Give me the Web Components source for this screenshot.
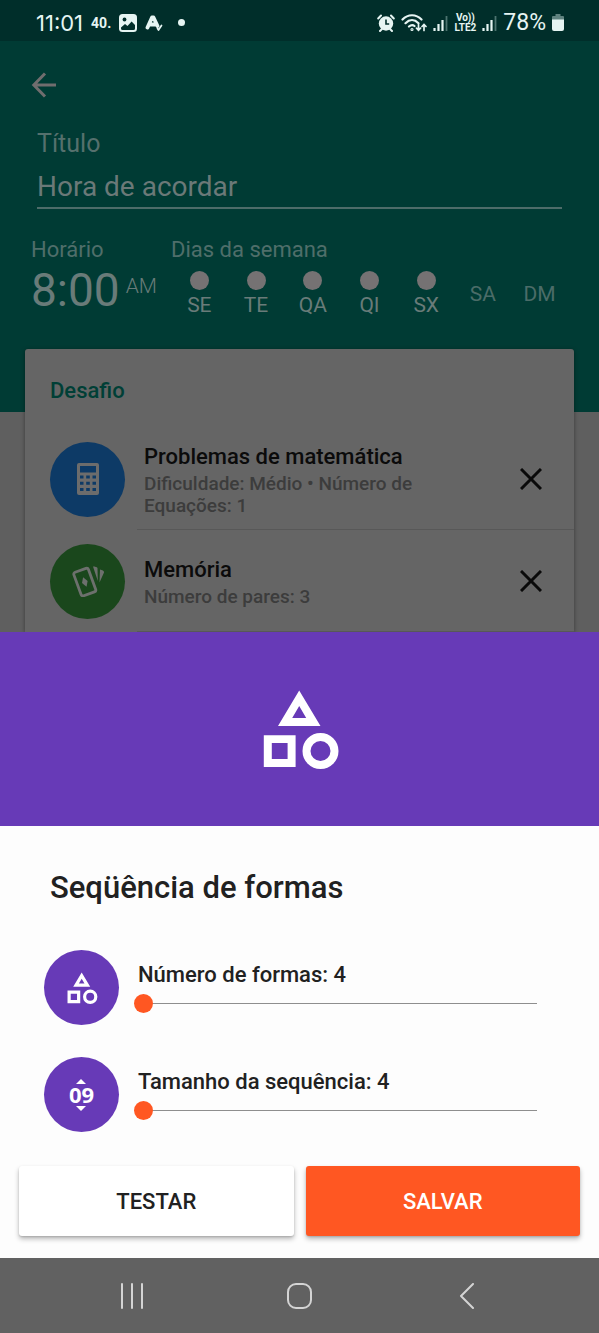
<!DOCTYPE html>
<html lang="pt-BR">
<head>
<meta charset="utf-8">
<meta name="viewport" content="width=device-width, initial-scale=1">
<title>Hora de acordar</title>
<style>
  body { margin: 0; background: #5f5f5f; font-family: Roboto, "Liberation Sans", sans-serif; }
</style>
</head>
<body>
<alarm-screen></alarm-screen>
<script>
const define = (name, html, setup) => {
  const tpl = document.createElement('template');
  tpl.innerHTML = html;
  customElements.define(name, class extends HTMLElement {
    constructor() {
      super();
      this.attachShadow({ mode: 'open' }).append(tpl.content.cloneNode(true));
    }
    connectedCallback() { if (setup) setup(this, this.shadowRoot); }
  });
};

define('shapes-icon', `
<style>:host{display:block;width:32px;height:32px}svg{display:block;width:100%;height:100%}</style>
<svg viewBox="1 0 80 80" fill="#fff" aria-hidden="true">
  <path fill-rule="evenodd" d="M40.2 1.5 61.5 37H19ZM40.2 17 33.2 29h14Z"/>
  <path fill-rule="evenodd" d="M4.8 46.3h31.8v31.8H4.8Zm8 7.8v15.8h15.8V54.1Z"/>
  <circle cx="61.5" cy="62" r="14" fill="none" stroke="#fff" stroke-width="8"/>
</svg>`);

define('status-bar', `
<style>
:host{display:flex;align-items:center;justify-content:space-between;box-sizing:border-box;height:41px;padding:4px 35px 0 36px;background:#002e2a;color:#e6f5f3}
div{display:flex;align-items:center}
.left{gap:8px}.right{gap:6px}
.time{font:22px/28px Inter,Roboto,sans-serif}
.pct{font-size:23px;line-height:28px}
.note{font-size:14px;font-weight:700;line-height:20px}
.lte{font-size:10px;font-weight:700;line-height:10px;text-align:center}
.lte span{display:block}
svg{display:block;flex:none}
.dot{width:7px;height:7px;border-radius:50%;background:currentColor;margin-left:7px}
</style>
<div class="left">
  <span class="time">11:01</span><span class="note">40.</span>
  <svg width="18" height="18" viewBox="0 0 18 18"><rect width="18" height="18" rx="3.5" fill="#e6f5f3"/><circle cx="5.500" cy="5.500" r="1.900" fill="#002e2a"/><path d="M2 13.500 6 10l2.500 2L12.600 7.500 16 11v3.500q0 1.500-1.500 1.500h-11Q2 16 2 14.500z" fill="#002e2a"/></svg>
  <svg width="18" height="18" viewBox="0 0 18 18" fill="none" stroke="#e6f5f3" stroke-linecap="round" stroke-linejoin="round"><path d="M2.500 13.500 7 3.500h1.500L12.500 12M4.500 10.500h7" stroke-width="3.800"/><path d="m12.500 14.500 1 1.500L16.500 11.500" stroke-width="1.700"/></svg>
  <span class="dot"></span>
</div>
<div class="right">
  <svg width="18" height="18" viewBox="0 0 18 18"><circle cx="9" cy="9.500" r="7.200" fill="#e6f5f3"/><path d="M1.200 4.500 4 1.500M16.800 4.500 14 1.500M3 17l2-2M15 17l-2-2" stroke="#e6f5f3" stroke-width="2" stroke-linecap="round"/><path d="M9 5.500V10h3.200" fill="none" stroke="#002e2a" stroke-width="1.600"/></svg>
  <svg width="26" height="18" viewBox="0 0 26 18" fill="none" stroke="#e6f5f3" stroke-width="2.200" stroke-linecap="round"><path d="M1.500 5.500C7-.2 15-.2 20.500 5.500M4.500 9.200c4-4 9-4 13 0M8 12.500c2-1.800 4-1.800 5.500-.5"/><circle cx="11" cy="15.500" r=".5" fill="#e6f5f3"/><path d="M17.500 10.500V16m-2-1.800 2 2 2-2M23 16.500V11m-2 1.500 2-2 2 2" stroke-width="1.700"/></svg>
  <svg width="15" height="16" viewBox="0 0 15 16"><path d="M1.500 16v-3M5.500 16V9M9.500 16V5" stroke="#e6f5f3" stroke-width="2.200"/><path d="M13.500 16V1" stroke="#4c7470" stroke-width="1.800"/></svg>
  <span class="lte"><span>Vo))</span><span>LTE2</span></span>
  <svg width="15" height="16" viewBox="0 0 15 16"><path d="M1.500 16v-3M5.500 16V9M9.500 16V5" stroke="#e6f5f3" stroke-width="2.200"/><path d="M13.500 16V1" stroke="#4c7470" stroke-width="1.800"/></svg>
  <span class="pct">78%</span>
  <svg width="12" height="17" viewBox="0 0 12 17"><path d="M3.500 0h5v2H11a1 1 0 0 1 1 1v4H0V3a1 1 0 0 1 1-1h2.500z" fill="#5f827f"/><path d="M0 5.500h12V15a2 2 0 0 1-2 2H2a2 2 0 0 1-2-2z" fill="#e6f5f3"/></svg>
</div>`);

define('day-toggle', `
<style>
:host{display:block}
label{display:flex;flex-direction:column;align-items:center;justify-content:center;gap:2px;height:64px;font-size:21px;line-height:26px;color:#4b6c68}
label:has(:checked){color:#697b79}
input{appearance:none;margin:0;width:19px;height:19px;border-radius:50%;background:#757273}
input:not(:checked){position:absolute;opacity:0}
</style>
<label><input type="checkbox"><slot></slot></label>`,
(el, root) => { root.querySelector('input').checked = el.hasAttribute('on'); });

define('alarm-header', `
<style>
:host{display:block;background:#003b34;padding:25px 31px 86px;color:#697b79}
button{font:inherit;color:inherit;background:none;border:0;padding:0;display:block;text-align:left}
svg{display:block}
.field{margin:26px 6px 28px}
.field label{display:block;font-size:25px;line-height:28px;color:#55706d;margin-bottom:7px}
input{display:block;box-sizing:border-box;width:100%;height:44px;padding:0;border:0;border-bottom:2px solid #4d6c69;background:none;font:28px/42px Roboto,"Liberation Sans",sans-serif;color:#6b7978;outline:0}
.when{display:grid;grid-template-columns:140px 1fr}
.cap{display:block;font-size:22px;line-height:26px;color:#4f6e6a}
.time{display:flex;gap:6px;font-size:46px;line-height:54px}
.time small{font-size:21px;line-height:46px;font-weight:300}
.days{display:grid;grid-template-columns:repeat(7,1fr);margin-top:-1px}
</style>
<button aria-label="Voltar"><svg width="25" height="38" viewBox="0 0 25 38" fill="none" stroke="#706d6e" stroke-width="3"><path d="M25 19H3M14 7.500 2.800 19 14 30.500"/></svg></button>
<div class="field"><label for="t">Título</label><input id="t" value="Hora de acordar"></div>
<div class="when">
  <div><span class="cap">Horário</span><button class="time">8:00<small>AM</small></button></div>
  <div><span class="cap">Dias da semana</span><div class="days">
    <day-toggle on>SE</day-toggle><day-toggle on>TE</day-toggle><day-toggle on>QA</day-toggle><day-toggle on>QI</day-toggle><day-toggle on>SX</day-toggle><day-toggle>SA</day-toggle><day-toggle>DM</day-toggle>
  </div></div>
</div>`);

define('challenge-card', `
<style>
:host{display:block;margin:-63px 25px 0;background:#656565;border-radius:3px 3px 0 0;box-shadow:0 1px 4px #0006}
h2{margin:0;padding:27px 25px 22px;font-size:22px;line-height:30px;font-weight:500;color:#003f36}
</style>
<h2>Desafio</h2><slot></slot>`);

define('challenge-item', `
<style>
:host{display:flex;align-items:center;height:102px;padding-left:25px}
.disc{display:grid;place-items:center;flex:none;width:75px;height:75px;border-radius:50%;background:var(--disc)}
.body{flex:1;display:flex;align-items:center;box-sizing:border-box;height:102px;margin-left:12px;padding:0 21px 0 7px;border-bottom:1px solid #585858}
.text{flex:1;padding:2px 48px 0 0}
.name{font-size:22px;line-height:28px;font-weight:500;color:#0b0b0b;margin-bottom:2px}
.info{font-size:19px;line-height:22px;font-weight:500;color:#3c3c3c}
button{width:44px;height:44px;padding:0;border:0;background:none;display:grid;place-items:center}
</style>
<div class="disc"><slot name="icon"></slot></div>
<div class="body"><div class="text"><div class="name"><slot name="name"></slot></div><div class="info"><slot></slot></div></div>
<button aria-label="Remover"><svg width="22" height="22" viewBox="0 0 22 22" stroke="#0a0a0a" stroke-width="3"><path d="M1 1 21 21M21 1 1 21"/></svg></button></div>`);

define('setting-slider', `
<style>
:host{display:flex;align-items:center;gap:15px}
.disc{display:grid;place-items:center;flex:none;width:75px;height:75px;border-radius:50%;background:#673ab7}
.body{flex:1;display:grid;padding-top:4px}
label{font-size:22px;line-height:28px;font-weight:500;color:#212121;padding-left:4px}
input{appearance:none;display:block;width:100%;height:30px;margin:0;background:none}
input::-webkit-slider-runnable-track{height:19px;background:linear-gradient(#8e8e8e,#8e8e8e) 9px center/100% 1px no-repeat}
input::-webkit-slider-thumb{appearance:none;width:19px;height:19px;border-radius:50%;background:#ff5722}
</style>
<div class="disc"><slot name="icon"></slot></div>
<div class="body"><label for="r"><slot></slot></label><input id="r" type="range" min="4" max="10" value="4"></div>`);

define('number-icon', `
<style>
:host{display:grid;justify-items:center;color:#fff;font:700 22px/20px "Open Sans","Noto Sans",sans-serif}
svg{display:block}
svg:last-child{margin-top:2px}
</style>
<svg width="10" height="5"><path d="M0 5 5 0l5 5z" fill="#fff"/></svg><span>09</span><svg width="10" height="5"><path d="M0 0 5 5l5-5z" fill="#fff"/></svg>`);

define('action-button', `
<style>
:host{display:block;flex:1}
button{display:block;width:100%;height:70px;padding:2px 0 0;border:0;border-radius:3px;background:#fff;color:#212121;font:500 22px/28px Roboto,"Liberation Sans",sans-serif;box-shadow:0 3px 5px #0004,0 1px 2px #0002}
:host([primary]) button{background:#ff5722;color:#fff}
</style>
<button><slot></slot></button>`);

define('options-sheet', `
<style>
:host{display:block;background:#fdfdfd}
.hero{display:grid;place-items:center;height:194px;background:#673ab7}
.hero shapes-icon{width:80px;height:80px}
h1{margin:0;padding:42px 50px;font-size:31px;line-height:40px;font-weight:500;color:#212121}
.settings{display:grid;gap:32px;padding:0 62px 34px 44px}
.actions{display:flex;gap:12px;padding:0 19px 22px}
</style>
<div class="hero"><shapes-icon></shapes-icon></div>
<h1><slot name="title"></slot></h1>
<div class="settings"><slot></slot></div>
<div class="actions"><slot name="actions"></slot></div>`);

define('system-nav', `
<style>
:host{display:grid;grid-template-columns:repeat(3,1fr);padding:0 48px;height:75px;background:#616161}
button{display:grid;place-items:center;padding:0;border:0;background:none}
svg{fill:none;stroke:#d4d4d4;stroke-width:2;stroke-linecap:round;stroke-linejoin:round}
</style>
<button aria-label="Recentes"><svg width="24" height="26"><path d="M2 1v24M12 1v24M22 1v24"/></svg></button>
<button aria-label="Início"><svg width="26" height="26"><rect x="2" y="1" width="23" height="24" rx="8"/></svg></button>
<button aria-label="Voltar"><svg width="16" height="26"><path d="M14 1 2 13l12 12"/></svg></button>`);

define('alarm-screen', `
<style>
:host{display:flex;flex-direction:column;min-height:100vh}
main{flex:1;overflow:hidden}
svg{display:block}
</style>
<status-bar></status-bar>
<main>
  <alarm-header></alarm-header>
  <challenge-card>
    <challenge-item style="--disc:#0d3a66">
      <svg slot="icon" width="22" height="32" viewBox="0 0 22 32"><path fill="#6c6c6c" fill-rule="evenodd" d="M2 0h18a2 2 0 0 1 2 2v28a2 2 0 0 1-2 2H2a2 2 0 0 1-2-2V2a2 2 0 0 1 2-2ZM3 3v6.500h16V3ZM3 12.500v3h3.500v-3Zm6.200 0v3h3.600v-3Zm6.300 0v3H19v-3ZM3 18.800v3h3.500v-3Zm6.200 0v3h3.600v-3Zm6.300 0v3H19v-3ZM3 25v3h3.500v-3Zm6.200 0v3h3.600v-3Zm6.300 0v3H19v-3Z"/></svg>
      <span slot="name">Problemas de matemática</span>Dificuldade: Médio • Número de Equações: 1
    </challenge-item>
    <challenge-item style="--disc:#1a471c">
      <svg slot="icon" width="34" height="32" viewBox="0 0 34 32"><g transform="rotate(-20 14 17)"><rect x="6" y="4.500" width="15.500" height="25" rx="2" fill="none" stroke="#6d706d" stroke-width="2.800"/><path d="m13.800 12 3 5-3 5-3-5z" fill="#6d706d"/></g><path fill="#6d706d" d="M22 1.500c2 0 4 .5 4.500 1.500l.3 13zM29 4.500c2 .3 4.500 1.500 4 3l-4.500 10z"/></svg>
      <span slot="name">Memória</span>Número de pares: 3
    </challenge-item>
  </challenge-card>
</main>
<options-sheet>
  <span slot="title">Seqüência de formas</span>
  <setting-slider><shapes-icon slot="icon"></shapes-icon>Número de formas: 4</setting-slider>
  <setting-slider><number-icon slot="icon"></number-icon>Tamanho da sequência: 4</setting-slider>
  <action-button slot="actions">TESTAR</action-button>
  <action-button slot="actions" primary>SALVAR</action-button>
</options-sheet>
<system-nav></system-nav>`);
</script>
</body>
</html>
